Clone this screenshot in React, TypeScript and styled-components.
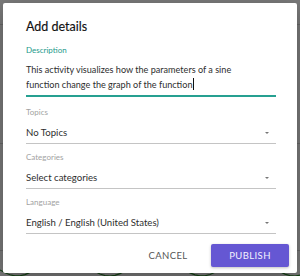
import React from 'react';
import styled, { createGlobalStyle } from 'styled-components';

const GlobalStyle = createGlobalStyle`
    html, body {
        margin: 0;
        padding: 0;
    }
    body {
        font-family: Lato, "Noto Sans", sans-serif;
        background: #ffffff;
    }
`;

const Page = styled.div`
    position: relative;
    width: 300px;
    height: 276px;
    overflow: hidden;
    background: #ffffff;
`;

const PageHeader = styled.div`
    height: 24px;
    border-bottom: 1px solid #d8d8d8;
`;

const PageRule = styled.div<{ $top: number }>`
    height: 1px;
    margin-top: ${(p) => p.$top}px;
    background: #d8d8d8;
`;

const Graph = styled.svg`
    position: absolute;
    left: 0;
    bottom: 0;
`;

const Backdrop = styled.div`
    position: absolute;
    inset: 0;
    background: rgba(0, 0, 0, 0.52);
    display: flex;
    align-items: flex-start;
    justify-content: center;
`;

const Dialog = styled.div`
    margin-top: 3px;
    width: 294px;
    height: 270px;
    box-sizing: border-box;
    background: #ffffff;
    border-radius: 2px;
    box-shadow: 0 6px 20px rgba(0, 0, 0, 0.3);
    padding: 14px 8px 6px 23px;
    display: flex;
    flex-direction: column;
`;

const Title = styled.h2`
    margin: 0;
    font-size: 12.5px;
    line-height: 20px;
    font-weight: 400;
    color: #111111;
    -webkit-text-stroke: 0.15px #111111;
`;

const Fields = styled.div`
    width: 250px;
    display: flex;
    flex-direction: column;
`;

const Field = styled.div<{ $gap: number }>`
    margin-top: ${(p) => p.$gap}px;
    display: flex;
    flex-direction: column;
`;

const Label = styled.label<{ $focused?: boolean }>`
    font-size: 8px;
    line-height: 10px;
    color: ${(p) => (p.$focused ? '#1d9a8b' : '#a2a2a2')};
`;

const TextArea = styled.div`
    margin-top: 7px;
    padding: 0 12px 3px 0;
    font-size: 9.1px;
    line-height: 15px;
    color: #2e2e2e;
    border-bottom: 2px solid #26a091;
`;

const Caret = styled.span`
    display: inline-block;
    width: 1px;
    height: 12px;
    margin-left: 0.5px;
    vertical-align: -2px;
    background: #111111;
`;

const SelectRow = styled.div`
    margin-top: 5px;
    height: 21px;
    display: flex;
    align-items: center;
    justify-content: space-between;
    padding-right: 7px;
    font-size: 9.6px;
    color: #2e2e2e;
    border-bottom: 1px solid #c4c4c4;
`;

const Arrow = styled.span`
    width: 0;
    height: 0;
    border-left: 2.5px solid transparent;
    border-right: 2.5px solid transparent;
    border-top: 2.5px solid #777777;
`;

const Actions = styled.div`
    margin-top: 10px;
    display: flex;
    justify-content: flex-end;
    align-items: center;
    gap: 11px;
`;

const Button = styled.button<{ $primary?: boolean }>`
    height: 23px;
    width: ${(p) => (p.$primary ? 78 : 64)}px;
    border: none;
    border-radius: 2px;
    font-family: Lato, "Noto Sans", sans-serif;
    font-size: 9.5px;
    font-weight: 400;
    letter-spacing: 0.4px;
    text-transform: uppercase;
    background: ${(p) => (p.$primary ? '#6557d3' : 'transparent')};
    color: ${(p) => (p.$primary ? '#f4f2ff' : '#555555')};
    box-shadow: ${(p) => (p.$primary ? '0 1px 3px rgba(0,0,0,0.25)' : 'none')};
    cursor: pointer;
`;

const selects = [
    { label: 'Topics', value: 'No Topics', gap: 10 },
    { label: 'Categories', value: 'Select categories', gap: 8 },
    { label: 'Language', value: 'English / English (United States)', gap: 8 },
];

const sinePoints = Array.from({ length: 61 }, (_, i) => {
    const x = i * 5;
    const y = 266 + 10 * Math.sin((x / 300) * Math.PI * 6.5 + 0.4);
    return `${x},${y.toFixed(1)}`;
}).join(' ');

const App: React.FC = () => {
    return (
        <>
            <GlobalStyle />
            <Page>
                <PageHeader />
                <PageRule $top={118} />
                <PageRule $top={106} />
                <Graph width="300" height="276" viewBox="0 0 300 276">
                    <polyline points={sinePoints} fill="none" stroke="#2a8a2a" strokeWidth="1.2" />
                </Graph>
                <Backdrop>
                    <Dialog>
                        <Title>Add details</Title>
                        <Fields>
                            <Field $gap={8}>
                                <Label $focused>Description</Label>
                                <TextArea>
                                    This activity visualizes how the parameters of a sine function change the
                                    graph of the function
                                    <Caret />
                                </TextArea>
                            </Field>
                            {selects.map((s) => (
                                <Field key={s.label} $gap={s.gap}>
                                    <Label>{s.label}</Label>
                                    <SelectRow>
                                        <span>{s.value}</span>
                                        <Arrow />
                                    </SelectRow>
                                </Field>
                            ))}
                        </Fields>
                        <Actions>
                            <Button>Cancel</Button>
                            <Button $primary>Publish</Button>
                        </Actions>
                    </Dialog>
                </Backdrop>
            </Page>
        </>
    );
};

export default App;
